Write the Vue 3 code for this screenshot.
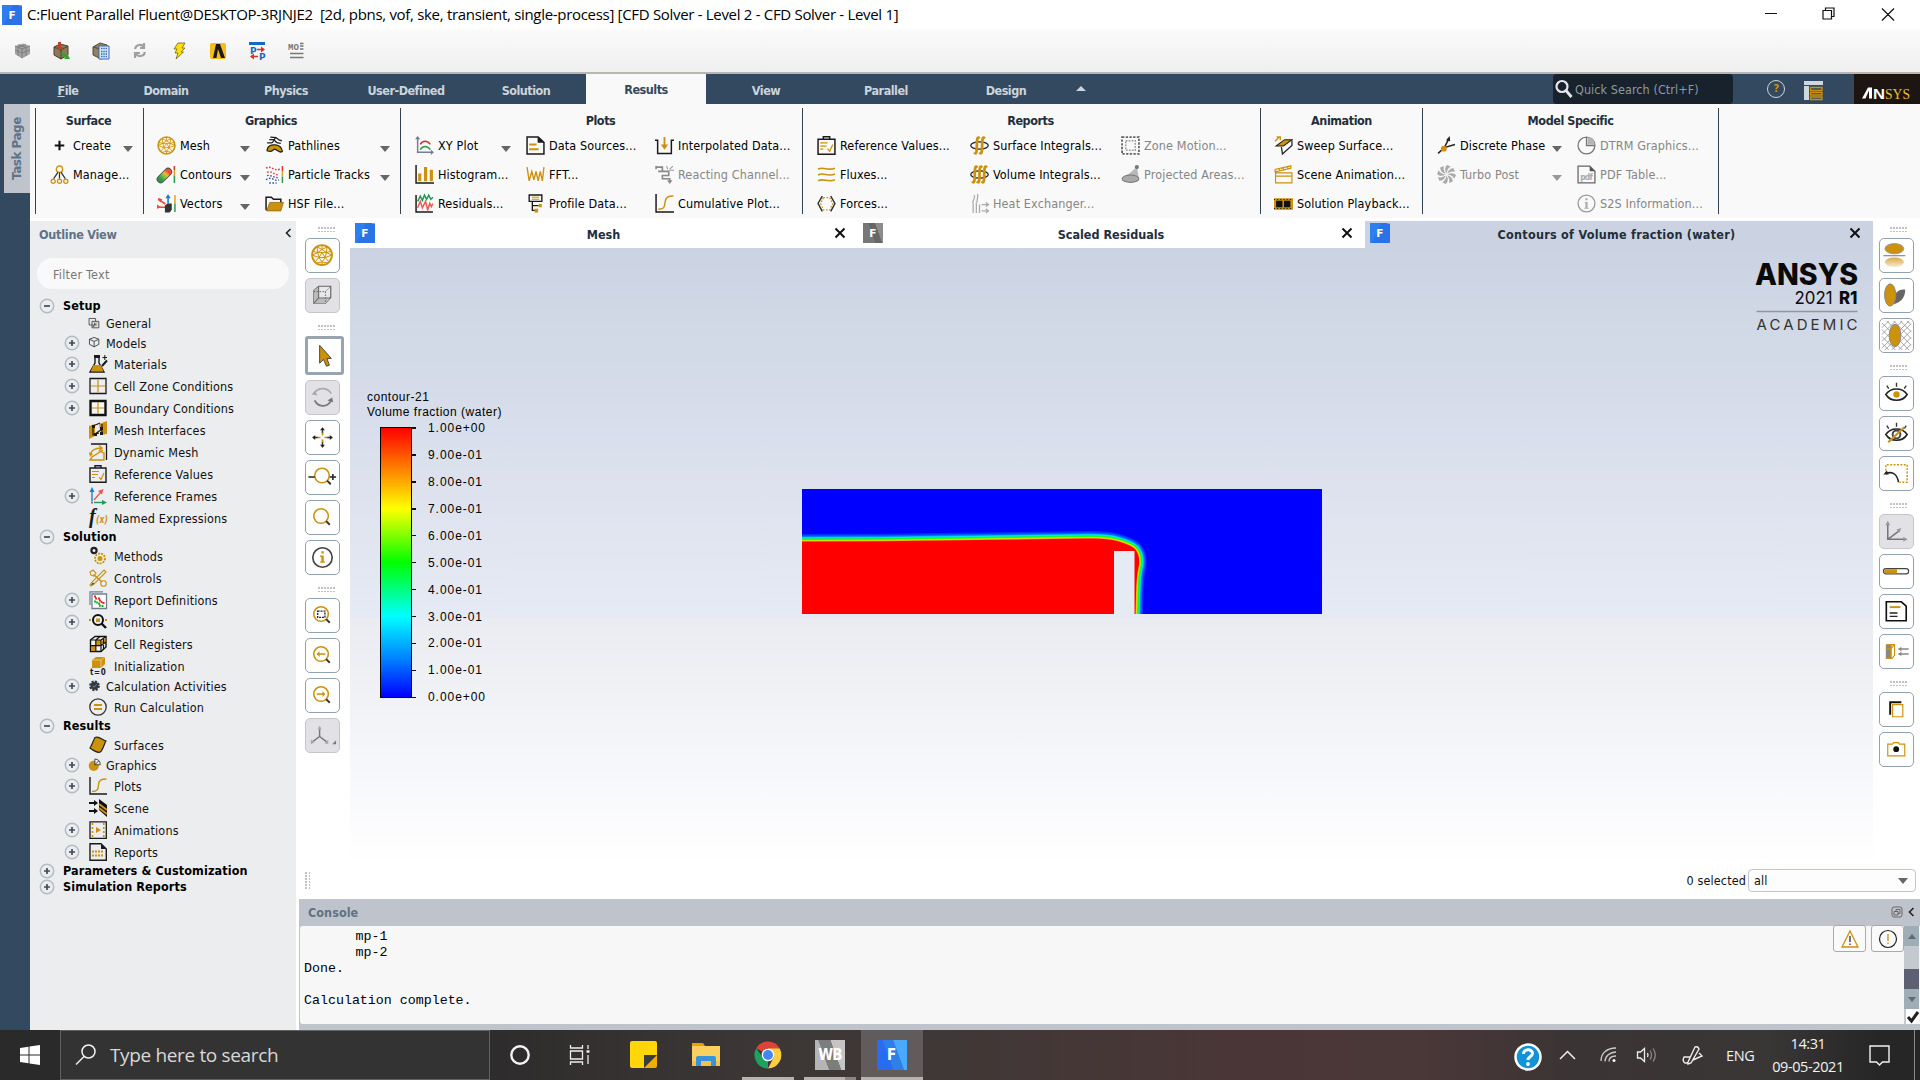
<script setup>
const gold = '#cc920e'
const dark = '#1a1a1a'

const stroke = (c, d, w = 1.4) => `<path d="${d}" fill="none" stroke="${c}" stroke-width="${w}"/>`
const fill = (c, d) => `<path d="${d}" fill="${c}"/>`

const meshBall = `<circle cx="9" cy="9" r="8" fill="#fdf6e6" stroke="${gold}" stroke-width="1.500"/>` +
  stroke(gold, 'M5 2.500 9 4.500 13 2.500M9 4.500 5.500 7 6.500 11 11.500 11 12.500 7 9 4.500V1M5.500 7 12.500 7M9 7 6.500 11M9 7 11.500 11M5.500 7 1 9M12.500 7 17 9M1.500 6 5.500 7 5 2.500M16.500 6 12.500 7 13 2.500M1 9 6.500 11 3.500 14.500M17 9 11.500 11 14.500 14.500M6.500 11 9 14.500 11.500 11M9 14.500V17M9 14.500 4.500 15.500M9 14.500 13.500 15.500', 0.8)
const clipboard = stroke(dark, 'M1 3H17V17.3H1ZM6 3V.8H12V3', 1.4) + stroke(gold, 'M3 6.5H10M3 9.5H9M3 12.5H6M10 12 12 14.5 15 8', 1.2)
const sCurve = stroke(dark, 'M1 0V17H18', 1.4) + stroke(gold, 'M3 14.5C9 14.5 9 12 9.5 8 10 3 12 2 17.5 2', 1.4)
const integral = (x) => `M${x + 5} 2.5C${x + 3} 0 ${x + 2.5} 3 ${x + 2.5} 9S${x + 2} 18 ${x} 15.5`

const icons = {
  plus: stroke('#111', 'M9 4.5V13.5M4.5 9H13.5', 2),
  manage: `<circle cx="9" cy="4" r="3" fill="none" stroke="${gold}" stroke-width="1.3"/>` + stroke('#333', 'M7.5 7 3.5 13M10.5 7 14.5 13M9 7V13', 1.2) +
    `<g fill="none" stroke="${gold}" stroke-width="1.2"><circle cx="3" cy="15.5" r="2"/><circle cx="9" cy="15.5" r="2"/><circle cx="15" cy="15.5" r="2"/></g>`,
  mesh: meshBall,
  pathlines: stroke('#222', 'M4 3.5H8C10 3.5 9 6 12 6.5L15 7M2 6.5H6C8 6.5 8 4 10 1.5L5 1M10 1.5C12 2 12 4 16 4.5', 1.2) +
    `<path d="M2 14C2 9 6 8 10 8.500S16 12 16.500 14.500C14 17 12 13 9 12.500 7 13 7 16 2 14Z" fill="${gold}" stroke="#222" stroke-width="1.200"/>`,
  contours: '<defs><linearGradient id="ct" x1="0" y1="1" x2="1" y2="0"><stop offset="0" stop-color="#2a9a4a"/><stop offset=".45" stop-color="#8bc53f"/><stop offset=".7" stop-color="#f2b632"/><stop offset="1" stop-color="#e5533d"/></linearGradient></defs>' +
    '<path d="M3.500 13.500 10.500 6.500" stroke="#444" stroke-width="7.600" stroke-linecap="round"/><path d="M3.500 13.500 10.500 6.500" stroke="url(#ct)" stroke-width="6.200" stroke-linecap="round"/>' + stroke('#c0392b', 'M16.500 1V5', 1.5) + stroke('#e0a020', 'M16.500 5V10', 1.5) + stroke('#2a9a4a', 'M16.500 10V17', 1.5),
  vectors: stroke('#e74c3c', 'M1 5 8 9.500M1 12.500H8', 1.5) + fill('#e74c3c', 'M0 10 4 12.500 0 14ZM1 3.500 5 5 3 8Z') + stroke('#1f7fc4', 'M10.500 2V9', 1.5) + fill('#1f7fc4', 'M8 4 10.500 0 13 4Z') +
    fill('#333', 'M7.500 11 10 9H14V15L12 17.500H7.500Z') + stroke('#e0a020', 'M17 1V9', 1.4) + stroke('#2a9a4a', 'M17 9V17', 1.4),
  particles: '<g fill="none" stroke-width="1.300" stroke-dasharray="1.500 1.500"><path d="M1 3C6 0 8 6 14 4" stroke="#d33"/><path d="M2 7C7 5 9 10 13 9" stroke="#d33"/><path d="M1 14C6 10 9 16 13 14" stroke="#334a9a"/><path d="M2 10C5 9 8 12 12 12M4 17H11" stroke="#334a9a"/></g>' + stroke('#d33', 'M16.500 1V6', 1.4) + stroke('#e0a020', 'M16.500 6V11', 1.4) + stroke('#2a9a4a', 'M16.500 11V17', 1.4),
  folder: stroke(dark, 'M1 15.500V3H6L8 5H15V8', 1.4) + `<path d="M1.500 16 4.500 8H17.500L15 16Z" fill="${gold}" stroke="#7a5608" stroke-width=".6"/>`,
  xyplot: stroke('#708090', 'M2.500 1V15.500H17', 1.4) + fill('#708090', 'M0 3 2.500 0 5 3ZM15 13 18 15.500 15 18Z') + stroke('#c33', 'M5 8C7 4 12 4 14.500 8', 1.4) + stroke('#2a9a4a', 'M5 13C7 9 12 9 14.500 13', 1.4),
  histogram: stroke(dark, 'M1 0V17H18', 1.4) + fill(gold, 'M3 8H6V15.500H3ZM8.500 2H11.500V15.500H8.500ZM14 4.500H17V15.500H14Z'),
  residuals: stroke(dark, 'M1 1V17H17', 1.4) + stroke('#1f9a58', 'M2.500 7 5 2 7 6 9 1 11 5 13 1 15 5 17 3', 1.4) + stroke('#ee5a52', 'M2.500 13 5 7 7 13 10 7 12 15 14 9 15.500 12 17 9', 1.4),
  datasrc: stroke(dark, 'M1 1H11.500L17 6V17H1Z', 1.4) + fill(dark, 'M11 1 17 6.500H11Z') + stroke(gold, 'M3 8H10M3 12.500H12', 2),
  fft: stroke(gold, 'M1 2 3 15 5.500 6 7.500 14 9.500 6 11.500 15 13.500 6 15.500 15 17 2', 1.3),
  profile: stroke(dark, 'M3 1H15V7H3ZM6 7V15.500H10M6 11H12', 1.3) + stroke(gold, 'M5.500 3H12.500M5.500 5H12.500', 1) + fill(gold, 'M12 9.500H15V12.500H12ZM8 14H11.500V17.500H8Z'),
  interp: stroke(dark, 'M0 4H2.500V16.500H15.500V4H18', 1.4) + stroke(gold, 'M9 1V9', 1.8) + fill(gold, 'M5.500 8H12.500L9 13Z'),
  reacting: stroke('#888', 'M1 2H7V6H3M1 1V4M7 6H13V10H7V13H14V16', 1.5) + fill('#888', 'M11.500 14.500H16.500L14 18ZM12 1 10 4ZM9 1 11 6') + stroke('#999', 'M11 1 12 4M17 1 14 4M13 5H18', 1),
  cumulative: sCurve,
  refvals: clipboard,
  fluxes: stroke(gold, 'M1 4C6 1 10 6 17 3M1 9.500C6 6.500 10 11.500 17 8.500M1 15C6 12 10 17 17 14', 1.5),
  forces: stroke('#333', 'M5 2 1 9 5 16.500M13 2 17 9 13 16.500', 1.4) + `<path d="M6 3.500H12L15 9 12 15H6L3.500 9Z" fill="none" stroke="${gold}" stroke-width="1.200" stroke-dasharray="1.500 1.500"/>`,
  surfint: `<ellipse cx="9" cy="9" rx="8.300" ry="3.500" fill="none" stroke="#222" stroke-width="1.200"/>` + stroke(gold, integral(4) + integral(9), 2.6),
  volint: `<ellipse cx="9" cy="9" rx="8.300" ry="3.500" fill="none" stroke="#222" stroke-width="1.200"/>` + stroke(gold, integral(2) + integral(6.5) + integral(11), 2.6),
  heatex: stroke('#aaa', 'M3 18V9M6 18V8M9 18V10M3 9C1 6 6 5 4 1M7 8C5 6 9 4 7 0M11 10H17M11 16H17M15 8 17.500 10 15 12M15 14 17.500 16 15 18', 1.2),
  zone: '<path d="M1 1H17V17H1Z" fill="none" stroke="#666" stroke-width="1.700" stroke-dasharray="2.200 1.300"/><path d="M4.500 4.500H13.500V13.500H4.500Z" fill="none" stroke="#999" stroke-width="1.400" stroke-dasharray="1.600 1.200"/>',
  projected: fill('#b8b8b8', 'M15 2 17 13H2Z') + '<ellipse cx="9" cy="13" rx="8" ry="3.500" fill="#aaa" stroke="#777"/><circle cx="15" cy="2" r="2" fill="#777"/>',
  sweep: `<path d="M2 9.500 10 3.500H17L9 9.500Z" fill="${gold}" stroke="#222"/><path d="M7 10.500 8 17 17 9V4" fill="none" stroke="#222" stroke-width="1.200"/>` + stroke(gold, 'M1 5 5 1M2.500 1H6V4', 1.3),
  scene: stroke(gold, 'M1.500 7.500H17V17H1.500ZM1.500 10.500H17M1 6.500 16 3V.8L1 4.200ZM5 3.500V5.500M9 2.500V4.500M13 2V4', 1.1),
  playback: fill(gold, 'M0 4H18V15H0Z') + fill('#111', 'M2 6.500H8V12.500H2ZM9.500 6.500H15.500V12.500H9.500Z') + '<path d="M0 5.200H18M0 13.800H18" stroke="#111" stroke-width="1" stroke-dasharray="1 2"/>',
  discrete: stroke('#222', 'M1 16.500 7 11 17 8M7 11 11 3', 1.4) + fill('#222', 'M8.500 4 12 0 12.500 5Z') + `<circle cx="6.500" cy="12" r="2.800" fill="${gold}"/>`,
  turbo: '<g fill="#aaa">' + [0, 45, 90, 135, 180, 225, 270, 315].map(a => `<path d="M9 8C7 5 7.500 2 9.500 0L13 1.500C10.500 3 9.500 5 9 8Z" transform="rotate(${a} 9 9)"/>`).join('') + '</g>',
  dtrm: '<circle cx="9" cy="9" r="8" fill="none" stroke="#777" stroke-width="1.200"/><path d="M10 8V1A8 8 0 0 1 17 8Z" fill="#b5b5b5"/><path d="M9 1V9H17" fill="none" stroke="#777" stroke-width="1.200"/>',
  pdf: stroke('#666', 'M1 1H12L17 6V17H1Z', 1.2) + fill('#555', 'M12 1 17 6H12Z') + '<text x="3" y="14" font-size="8" font-weight="bold" fill="#aaa" font-family="DejaVu Sans Condensed,sans-serif" textLength="12">pdf</text>',
  s2s: '<circle cx="9" cy="9" r="8" fill="none" stroke="#999" stroke-width="1.200"/>' + fill('#aaa', 'M8 4H10V6H8ZM7.500 7.500H10V13H11V14H7V13H8V8.500H7.500Z'),
  general: stroke('#444', 'M1.500 2H10.500V11H1.500Z', 1.2) + '<path d="M5.500 6H15V15H5.500Z" fill="#ddd" stroke="#444" stroke-width="1.200"/>' + stroke('#444', 'M7 13 12 8M9 13H7V10M9 8V11H12', 1.1),
  models: stroke('#444', 'M8.500 2 15 4.500V11.500L8.500 15 2 11.500V4.500ZM2 4.500 8.500 7.500 15 4.500M8.500 7.500V15', 1.3),
  materials: fill(dark, 'M5 0H11V3H5Z') + stroke(dark, 'M6 3V8L1 17H15L10 8V3', 1.4) + fill(gold, 'M4.500 10H11.500L14.500 16.300H1.800Z') + stroke(dark, 'M13 11 18 5.500', 2) + stroke(dark, 'M13.500 2.500H18M15.800 0V5', 1),
  cellzone: stroke(dark, 'M1 1.500H17V16.500H1Z', 1.3) + stroke(gold, 'M9 2.500V15.500M2 9H16', 1.2),
  boundary: '<path d="M1.500 2H16.500V16H1.500Z" fill="#f4f4f4" stroke="#111" stroke-width="2.400"/>' + stroke(gold, 'M9 3V15M3 9H15', 1.2),
  interfaces: fill(gold, 'M0 5 6 3V15L0 18ZM10 3 18 0V13L12 14Z') + stroke(dark, 'M4 5V14L10 12M4 5 11 2M13 3V12M6 13 13 8', 1.2) + fill(dark, 'M3 4H6V7H3ZM5 12H8V15H5ZM11 6H14V9H11ZM11 11H14V14H11Z'),
  dynamic: stroke(dark, 'M2 1H17.500V17', 1.3) + stroke(gold, 'M1 12C2 8 5 5 12 5M1 17H15V10C12 10 12 8 14 7L3 14ZM10 2.500 13 5 10 8', 1.4) + fill(gold, 'M0 9 4 11 1 14Z'),
  frames: stroke('#1f7fc4', 'M3 14V2', 1.4) + fill('#1f7fc4', 'M.5 5 3 0 5.500 5Z') + stroke('#e55', 'M5 13 12 5', 1.4) + fill('#e55', 'M9 4 14.500 2 13 7.500Z') + stroke('#1f9a58', 'M5 15.500H14', 1.4) + fill('#1f9a58', 'M13 13 18 15.500 13 18Z') + fill('#777', 'M2 14.500H4V16.500H2Z'),
  named: '<text x="0" y="14" font-size="20" font-weight="bold" font-style="italic" fill="#1a1a1a" font-family="Liberation Serif,serif">f</text><text x="7" y="13.500" font-size="10" font-weight="bold" font-style="italic" fill="#cc920e" font-family="DejaVu Sans Condensed,sans-serif" textLength="12" lengthAdjust="spacingAndGlyphs">(x)</text>',
  methods: '<circle cx="5" cy="3.500" r="2.600" fill="none" stroke="#222" stroke-width="2.200"/>' + `<circle cx="11" cy="11.500" r="5" fill="none" stroke="${gold}" stroke-width="1.800" stroke-dasharray="2 1"/><circle cx="11" cy="11.500" r="2.500" fill="${gold}"/>`,
  controls: `<g fill="none" stroke="${gold}" stroke-width="1.100"><path d="M4.500 5.500 13 13" stroke-width="1.600"/><path d="M1 3 4 1 7 4 5 7 2 6ZM15 1 17 3 5 15 2 17 1 16 3 13Z"/><circle cx="14.500" cy="14.500" r="2.800"/></g>` + fill(dark, 'M2 16 4 13.500 5 15Z'),
  repdef: stroke('#708090', 'M1 14V.8H14', 1.2) + '<path d="M3 3H17.500V17.500H3Z" fill="#fff" stroke="#708090" stroke-width="1.300"/><path d="M5 5.500H7V7.500H10V9.500H12.500V12H15.500" fill="none" stroke="#e22" stroke-width="1.800" stroke-dasharray="2 1"/><path d="M5 10.500H8V12.500H11V15H15" fill="none" stroke="#2a2" stroke-width="1.800" stroke-dasharray="2 1"/>',
  monitors: '<circle cx="9" cy="7" r="5" fill="#eee" stroke="#111" stroke-width="2"/>' + fill(gold, 'M7 5.500H11V9H7ZM0 6H2V8H0ZM16 6H18V8H16Z') + stroke('#111', 'M12.500 10.500 17 15', 2.4),
  registers: '<path d="M1.500 5 6 1.500H17V12L12 16.500H1.500Z" fill="#f4f4f4" stroke="#111" stroke-width="1.400"/>' + fill(gold, 'M7 5H12V10.500H7ZM2 11H6.500V16H2ZM13 6 16.500 3V7L13 10Z') + stroke('#111', 'M1.500 5H12V16.500M12 5 17 1.500M1.500 10.700H12L17 7M6.800 5V16.500L6.800 5 11 1.500M14.500 3V14', 1.2),
  init: fill(gold, 'M3 3 7 0H16V7L12 11H3Z') + stroke('#f0d090', 'M3 3H12V11M12 3 16 0', .8) + '<text x="1" y="18" font-size="8" font-weight="bold" fill="#222" font-family="DejaVu Sans Condensed,sans-serif" textLength="16">t=0</text>',
  calcact: '<circle cx="9" cy="8" r="5.500" fill="#333a44" stroke="#333a44" stroke-width="4" stroke-dasharray="2.600 1.700"/>' + stroke('#8a93a0', 'M6.500 8 8.500 10 12 6', 1.1),
  run: '<circle cx="9" cy="9" r="8.200" fill="none" stroke="#333" stroke-width="1.300"/>' + stroke(gold, 'M5 7H13M5 11H13', 1.8),
  surfaces: `<path d="M1 12C3 9 4 5 6 1.500 10 0 12 3 17 5 15 8 15 11 12 15.500 9 18 5 15 1 12Z" fill="${gold}" stroke="#222" stroke-width="1.200"/>`,
  gfx: `<circle cx="8" cy="9.500" r="7" fill="${gold}"/>` + '<path d="M9.500 0V8H17C17 3 14 0 9.500 0Z" fill="#eee" stroke="#333" stroke-width="1.200"/>' + stroke('#333', 'M9.500 8 15 2.500', 1.2),
  plots: sCurve,
  scenetree: stroke('#111', 'M0 4H7M0 12H7', 1.8) + fill('#111', 'M5 1 9 4 5 7ZM5 9 9 12 5 15ZM10 0 18 6V18L10 11Z') + stroke(gold, 'M10 5 18 11M10 9 18 15', 2),
  animations: stroke(dark, 'M1 .8H17.300V17.300H1Z', 1.3) + '<path d="M3.500 2V16M14.800 2V16" stroke="#cc920e" stroke-width="1.600" stroke-dasharray="2 2"/>' + fill(gold, 'M7 6 12 9 7 12Z'),
  reports: stroke(dark, 'M1 .8H12L17.300 6V17.300H1Z', 1.4) + fill(dark, 'M12 1 17.300 6H12Z') + '<path d="M3 8.500H15M3 12.500H15" stroke="#cc920e" stroke-width="2" stroke-dasharray="2 1"/>'
}

// icons of the floating view toolbars, drawn on a 34 x 34 grid
const glass = (x = 15.5, y = 15.5) => `<circle cx="${x}" cy="${y}" r="7.500" fill="none" stroke="${gold}" stroke-width="1.600"/>` + stroke('#333', `M${x + 5.2} ${y + 5.2} ${x + 9} ${y + 9}`, 2)
const eye = stroke('#222', 'M6 18C11 10.500 23 10.500 28 18 23 26 11 26 6 18Z', 1.6) + stroke('#333', 'M17 6V10M7 9 9 12M27 9 25 12', 1.4)
const tools = {
  mesh: `<g transform="translate(5 5) scale(1.280)">${meshBall}</g>`,
  cube: '<path d="M8 12 13 7.500H25.500V19L20 25H8Z" fill="#e8e8ea" stroke="#666" stroke-width="1.200"/>' + fill('#bbb', 'M8 12 13 8V19L8 25ZM13 20H25L20 25H8Z') + stroke('#666', 'M13 8V19.500H25M13 19.500 8 25', 1.1) + '<path d="M8 13H20V24M20 13 25 8" fill="none" stroke="#666" stroke-dasharray="1.500 1.500"/>',
  pointer: `<path d="M12 6.500V25L16 21 19 28 22 27 19.500 20H24Z" fill="${gold}" stroke="#444" stroke-width="1"/>`,
  rotate: stroke('#aaa', 'M8 14C11 6 22 6 26 13', 1.6) + stroke('#777', 'M9 20C12 27 22 28 26 20', 1.8) + fill('#aaa', 'M6 14 9 10 12 15Z') + fill('#777', 'M22 20 27 17 28 22Z'),
  pan: stroke(gold, 'M17 11V15M17 19V23M11 17H15M19 17H23', 1.8) + stroke('#333', 'M17 8V12M17 22V27M7 17H12M22 17H27', 1.4) + fill('#222', 'M14.500 9.500 17 6.500 19.500 9.500ZM14.500 24.500 17 27.500 19.500 24.500ZM9.500 14.500 6.500 17 9.500 19.500ZM24.500 14.500 27.500 17 24.500 19.500Z'),
  zoompm: glass(16.5, 15) + stroke('#222', 'M2.500 16.500H9M24.500 16.500H31M27.700 13.300V19.700', 1.6),
  zoom: glass(),
  info: '<circle cx="17" cy="17" r="10" fill="none" stroke="#444" stroke-width="1.700"/>' + fill(gold, 'M15.800 10.500H18.300V13H15.800ZM14.500 15H18.300V21H19.500V22.500H14.500V21H15.800V16.500H14.500Z'),
  zoombox: glass() + '<path d="M12 12.500H19.500V19H12Z" fill="none" stroke="#222" stroke-width="1.400" stroke-dasharray="2 1"/>',
  zoomback: glass() + stroke(gold, 'M11.500 15.500H20', 1.6) + fill(gold, 'M14 12.500V18.500L11 15.500Z'),
  zoomfwd: glass() + stroke(gold, 'M11 15.500H19', 1.6) + fill(gold, 'M17 12.500V18.500L20 15.500Z'),
  axes3: stroke('#777', 'M14 8V18L6 24M14 18 22 24', 1.5) + fill('#aaa', 'M12 11 14 7 16 11ZM5 21 9 24 5 26ZM23 21 19 25 23 26Z') + fill('#777', 'M27 26H31V22Z'),
  reflect: `<ellipse cx="14.800" cy="10" rx="9.700" ry="5.300" fill="${gold}" stroke="#999"/>` + stroke('#888', 'M3.500 17.200H26', 1.2) + '<defs><linearGradient id="rf" x1="0" y1="0" x2="0" y2="1"><stop offset="0" stop-color="#d9a94a"/><stop offset="1" stop-color="#f7ecd4"/></linearGradient></defs><ellipse cx="14.800" cy="24" rx="9.700" ry="5" fill="url(#rf)"/>',
  shadow: '<path d="M13 24C14 15 19 10 26 11 26 20 20 25 13 26Z" fill="#666"/>' + `<ellipse cx="10.500" cy="16.500" rx="5.800" ry="11.500" fill="${gold}" stroke="#888"/>`,
  hatch: '<path d="M2 9 9 2M2 16 16 2M2 23 23 2M2 30 30 2M5 32 32 5M12 32 32 12M19 32 32 19M26 32 32 26M2 25 9 32M2 18 16 32M2 11 23 32M2 4 30 32M7 2 32 27M14 2 32 20M21 2 32 13M28 2 32 6" stroke="#999" stroke-width=".9"/>' + `<ellipse cx="15.500" cy="17" rx="6" ry="11.500" fill="${gold}" stroke="#888"/>`,
  eye: eye + `<circle cx="17" cy="18" r="3.300" fill="${gold}"/>`,
  eyeoff: eye + '<circle cx="17" cy="18" r="4" fill="none" stroke="#444" stroke-width="2"/>' + stroke(gold, 'M8.500 26 25 10.500', 2.2),
  undo: `<path d="M6 14V8H28V26H20" fill="none" stroke="${gold}" stroke-width="1.500" stroke-dasharray="2 1.500"/>` + stroke('#222', 'M6 17C14 14 18 19 19 26', 1.6) + fill('#222', 'M3.500 18 7 14 9 18Z'),
  axes: stroke('#777', 'M8 9V25H25M8 25 20 16', 1.6) + fill('#999', 'M5.500 10.500 8 6 10.500 10.500ZM24 22.500 28.500 25 24 27.500ZM17 15 22 13.500 20 18Z'),
  ruler: '<rect x="3.500" y="14" width="26" height="5.500" rx="2.700" fill="#fff" stroke="#444" stroke-width="1.200"/>' + fill(gold, 'M6.500 14.600H17.500V19H6.500C3.500 18.500 3.500 15 6.500 14.600Z'),
  note: stroke('#111', 'M6.500 7H22L27 11.500V26.500H6.500Z', 1.7) + stroke(gold, 'M10 12.500H21', 2) + stroke('#222', 'M10 18.500H18M10 22H18', 1.5),
  box: fill('#888', 'M6 10H12V24.500H6Z') + stroke(gold, 'M6.500 10H15V21L12 24.500M6 14H11L15 10M11 14V24H6', 1.2) + stroke('#888', 'M19 14.500H29.500M19 19.500H29.500', 1.5) + fill('#888', 'M19 14.500 22 12V17ZM19 19.500 22 17V22Z'),
  copy: stroke('#111', 'M10.500 22.500V9.500H22', 2) + stroke(gold, 'M13 12H23.500V24.500H13Z', 1.2),
  camera: stroke(gold, 'M8 11.500H13L14 10H19L20 11.500H25.500V23.500H8Z', 1.2) + '<circle cx="16.700" cy="16.700" r="3" fill="#111"/>'
}

const leftTools = [
  ['dots'], ['mesh'], ['cube', 'off'], ['dots'], ['pointer', 'on'], ['rotate', 'off'], ['pan'], ['zoompm'], ['zoom'], ['info'],
  ['dots'], ['zoombox'], ['zoomback'], ['zoomfwd'], ['axes3', 'off']
]
const rightTools = [
  ['dots'], ['reflect'], ['shadow'], ['hatch'], ['dots'], ['eye'], ['eyeoff'], ['undo'],
  ['dots'], ['axes', 'off'], ['ruler'], ['note'], ['box'], ['dots'], ['copy'], ['camera']
]

const tabs = ['Domain', 'Physics', 'User-Defined', 'Solution', 'Results', 'View', 'Parallel', 'Design']

// item: [icon, label, arrow position, disabled]
const groups = [
  { title: 'Surface', cls: 'g1', cols: [[['plus', 'Create', 73], ['manage', 'Manage...']]] },
  { title: 'Graphics', cls: 'g2', cols: [[['mesh', 'Mesh', 83], ['contours', 'Contours', 83], ['vectors', 'Vectors', 83]], [['pathlines', 'Pathlines', 114.5], ['particles', 'Particle Tracks', 114.5], ['folder', 'HSF File...']]] },
  { title: 'Plots', cls: 'g3', cols: [[['xyplot', 'XY Plot', 86], ['histogram', 'Histogram...'], ['residuals', 'Residuals...']], [['datasrc', 'Data Sources...'], ['fft', 'FFT...'], ['profile', 'Profile Data...']], [['interp', 'Interpolated Data...'], ['reacting', 'Reacting Channel...', 0, true], ['cumulative', 'Cumulative Plot...']]] },
  { title: 'Reports', cls: 'g4', cols: [[['refvals', 'Reference Values...'], ['fluxes', 'Fluxes...'], ['forces', 'Forces...']], [['surfint', 'Surface Integrals...'], ['volint', 'Volume Integrals...'], ['heatex', 'Heat Exchanger...', 0, true]], [['zone', 'Zone Motion...', 0, true], ['projected', 'Projected Areas...', 0, true]]] },
  { title: 'Animation', cls: 'g5', cols: [[['sweep', 'Sweep Surface...'], ['scene', 'Scene Animation...'], ['playback', 'Solution Playback...']]] },
  { title: 'Model Specific', cls: 'g6', cols: [[['discrete', 'Discrete Phase', 115], ['turbo', 'Turbo Post', 115, true]], [['dtrm', 'DTRM Graphics...', 0, true], ['pdf', 'PDF Table...', 0, true], ['s2s', 'S2S Information...', 0, true]]] }
]

// row: [kind, label, icon, expander]
const tree = [
  ['head', 'Setup', '', '-'], ['small', 'General', 'general', ''], ['small mid', 'Models', 'models', '+'], ['item', 'Materials', 'materials', '+'],
  ['item', 'Cell Zone Conditions', 'cellzone', '+'], ['item', 'Boundary Conditions', 'boundary', '+'], ['item', 'Mesh Interfaces', 'interfaces', ''],
  ['item', 'Dynamic Mesh', 'dynamic', ''], ['item', 'Reference Values', 'refvals', ''], ['item', 'Reference Frames', 'frames', '+'], ['item', 'Named Expressions', 'named', ''],
  ['head', 'Solution', '', '-'], ['item', 'Methods', 'methods', ''], ['item', 'Controls', 'controls', ''], ['item', 'Report Definitions', 'repdef', '+'],
  ['item', 'Monitors', 'monitors', '+'], ['item', 'Cell Registers', 'registers', ''], ['item', 'Initialization', 'init', ''],
  ['small', 'Calculation Activities', 'calcact', '+'], ['item', 'Run Calculation', 'run', ''],
  ['head', 'Results', '', '-'], ['item', 'Surfaces', 'surfaces', ''], ['small', 'Graphics', 'gfx', '+'], ['item', 'Plots', 'plots', '+'],
  ['item', 'Scene', 'scenetree', ''], ['item', 'Animations', 'animations', '+'], ['item', 'Reports', 'reports', '+'],
  ['head', 'Parameters & Customization', '', '+'], ['head', 'Simulation Reports', '', '+']
]

const levels = ['1.00e+00', '9.00e-01', '8.00e-01', '7.00e-01', '6.00e-01', '5.00e-01', '4.00e-01', '3.00e-01', '2.00e-01', '1.00e-01', '0.00e+00']

const water = 'M-20 52.500 L80 52.300 285 49.500 Q305 49 315 52 Q329 56 333 60 Q338 66 337 76 Q334.500 85 334 105 L333 145 H-20Z'
const bands = [
  ['#0030ff', 15], ['#0068ff', 12], ['#00b0ff', 9.500], ['#00f0e0', 8], ['#00f060', 6.500], ['#20ff00', 5], ['#d8f000', 3], ['#ffa800', 1.500], ['#ff0000', 0]
]
</script>

<template>
  <div class="window">
    <header class="titlebar">
      <span class="flogo"><b>F</b></span>
      <span class="title">C:Fluent Parallel Fluent@DESKTOP-3RJNJE2&nbsp; [2d, pbns, vof, ske, transient, single-process] [CFD Solver - Level 2 - CFD Solver - Level 1]</span>
      <svg class="winbtns" width="150" height="29" fill="none" stroke="#111" stroke-width="1.2">
        <path d="M5 14.500H17M63 11.500H71.500V20H63ZM65.500 11V9H74V17.500H72M122 9.500 134 21.500M134 9.500 122 21.500" />
      </svg>
    </header>

    <div class="quickbar">
      <svg width="320" height="43">
        <g>
          <path d="M15 17 23 14.500 30 17V25L22 29.500 15 25Z" fill="#a2a2a2" />
          <path d="M15 17 22 20 30 17M22 20V29M15 21 22 24 30 21M18 15.500 26 18.500V27M26 15.500 18 18.500V27" stroke="#777" fill="none" stroke-width=".8" />
        </g>
        <g>
          <path d="M54 18 60 15 68 17V26L61 30 54 26Z" fill="#8a7a55" stroke="#4c432d" />
          <path d="M54 18 61 21 68 17M61 21V30" stroke="#4c432d" fill="none" />
          <path d="M58 13H61V18H63L59.500 22 56 18H58Z" fill="#b8442c" />
          <path d="M62 23 67 26.500V24L70 30H64L65.500 28.500 61 25Z" fill="#2fa52d" />
        </g>
        <g>
          <path d="M93 18 100 14 107 16V28L101 30 93 26Z" fill="#8f8260" stroke="#544a33" />
          <path d="M93 18 100 20V29" fill="none" stroke="#544a33" />
          <path d="M99 17H109V30H99Z" fill="#dce9fb" stroke="#3c6bb4" />
          <path d="M101 19.500H107M101 22.500H107M101 25H107M101 27.500H107" stroke="#3c6bb4" stroke-dasharray="1.500 .8" stroke-width="1.500" />
        </g>
        <path d="M135 20C136 15 142 15 144 18M145 23C144 28 138 28 136 25M144 14V19H140M135 29V24H140" fill="none" stroke="#a0a0a0" stroke-width="2.200" />
        <path d="M178 14H185L182 19H185L181 23H183.500L176 30 178 24H175L177 20H174Z" fill="#ffe000" stroke="#6d6320" stroke-width=".8" />
        <rect x="210" y="14" width="16" height="16" rx="2" fill="#f7bd1e" />
        <path d="M213 29 216 15H220L225 29H221L218 20 216.500 29Z" fill="#1c1a17" />
        <path d="M249 13H265V16H249Z" fill="#1768c4" />
        <text x="250" y="25" class="pp">P</text><text x="259" y="31" class="pp">P</text>
        <path d="M257 20.500H264M251 27.500H258" stroke="#e03024" stroke-width="1.600" />
        <path d="M261 17.500 265 20.500 261 23.500ZM254 24.500 250 27.500 254 30.500Z" fill="#e03024" />
        <text x="288" y="21" class="mo" textLength="11" lengthAdjust="spacingAndGlyphs">MO</text>
        <path d="M300 14.500H303.500M300 17H303.500M300 20H303.500M290 24.500H303.500M290 28.500H303.500" stroke="#777" stroke-width="1.700" />
      </svg>
    </div>

    <nav class="tabs">
      <span class="tab file"><u>F</u>ile</span>
      <span v-for="t in tabs" :key="t" class="tab" :class="{ active: t === 'Results' }">{{ t }}</span>
      <i class="up"></i>
      <span class="search">
        <svg width="19" height="22" fill="none" stroke="#e3e8ec"><circle cx="7" cy="8.500" r="5.500" stroke-width="2.200" /><path d="M11 12.500 16.500 19" stroke-width="2.800" /></svg>
        Quick Search (Ctrl+F)
      </span>
      <span class="help">?</span>
      <svg class="layout" width="20" height="20"><path d="M0 0H19V4H0ZM0 5H5V19H0Z" fill="#cfd6dd" /><path d="M6.500 6.500H18V9.500H6.500ZM6.500 11.500H18V14H6.500ZM6.500 16H18V18.500H6.500Z" fill="none" stroke="#cc920e" stroke-width="1.300" /></svg>
      <span class="brand">
        <svg width="65" height="30"><path d="M8 24.500 14 13.500H18V24.500H15V16.500L11.500 24.500Z" fill="#fff" /><text x="19" y="24.500" fill="#fff" font-weight="bold" textLength="12" lengthAdjust="spacingAndGlyphs">N</text><text x="31" y="24.500" fill="#efc02e" textLength="25" lengthAdjust="spacingAndGlyphs">SYS</text></svg>
      </span>
    </nav>

    <div class="body">
      <aside class="rail"><span>Task Page</span></aside>
      <div class="main">
        <section class="ribbon">
          <div v-for="g in groups" :key="g.title" class="group" :class="g.cls">
            <h4>{{ g.title }}</h4>
            <div class="cols">
              <div v-for="(c, i) in g.cols" :key="i" class="col">
                <div v-for="it in c" :key="it[1]" class="cmd" :class="{ disabled: it[3] }">
                  <svg width="19" height="19" viewBox="0 0 18 18" v-html="icons[it[0]]"></svg>
                  <span>{{ it[1] }}</span>
                  <i v-if="it[2]" class="down" :style="{ left: it[2] + 'px' }"></i>
                </div>
              </div>
            </div>
          </div>
        </section>

        <div class="work">
          <aside class="outline">
            <div class="ohead"><b>Outline View</b><svg width="8" height="12" fill="none" stroke="#222" stroke-width="1.600"><path d="M6.500 1 2.500 5 6.500 9" /></svg></div>
            <div class="filter">Filter Text</div>
            <div class="tree">
              <div v-for="r in tree" :key="r[1]" class="row" :class="r[0]">
                <span class="exp"><svg v-if="r[3]" width="16" height="16"><circle cx="8" cy="8" r="6.700" fill="none" stroke="#b3bcc4" stroke-width="1.500" /><path :d="r[3] === '+' ? 'M5 8H11M8 5V11' : 'M5 8H11'" stroke="#414b5c" stroke-width="1.700" /></svg></span>
                <svg v-if="r[2]" class="ico" viewBox="0 0 18 18" v-html="icons[r[2]]"></svg>
                <span class="lbl">{{ r[1] }}</span>
              </div>
            </div>
          </aside>

          <div class="right">
            <div class="stage">
              <div class="toolcol left">
                <template v-for="(t, i) in leftTools" :key="i">
                  <i v-if="t[0] === 'dots'" class="dots"></i>
                  <span v-else class="tool" :class="t[1]"><svg width="33" height="33" viewBox="0 0 34 34" v-html="tools[t[0]]"></svg></span>
                </template>
              </div>

              <div class="views">
                <div class="vtabs">
                  <div class="vtab t1"><span class="flogo"><b>F</b></span><b class="name">Mesh</b><svg class="x" width="12" height="12"><path d="M1.500 1.500 10.500 10.500M10.500 1.500 1.500 10.500" stroke="#111" stroke-width="2" /></svg></div>
                  <div class="vtab t2"><span class="flogo grey"><b>F</b></span><b class="name">Scaled Residuals</b><svg class="x" width="12" height="12"><path d="M1.500 1.500 10.500 10.500M10.500 1.500 1.500 10.500" stroke="#111" stroke-width="2" /></svg></div>
                  <div class="vtab t3"><span class="flogo"><b>F</b></span><b class="name">Contours of Volume fraction (water)</b><svg class="x" width="12" height="12"><path d="M1.500 1.500 10.500 10.500M10.500 1.500 1.500 10.500" stroke="#111" stroke-width="2" /></svg></div>
                </div>
                <div class="canvas">
                  <svg class="mark" width="104" height="72">
                    <text x="0" y="23" font-size="30" font-weight="800" textLength="103" lengthAdjust="spacingAndGlyphs">ANSYS</text>
                    <text x="39.500" y="41.500" font-size="17.500" textLength="38" lengthAdjust="spacingAndGlyphs">2021</text>
                    <text x="84" y="41.500" font-size="17.500" font-weight="800" textLength="18.500" lengthAdjust="spacingAndGlyphs">R1</text>
                    <path d="M1.500 49.500H102.500" stroke="#8e94a0" stroke-width="1.300" />
                    <text x="1.500" y="68" font-size="15" fill="#333" textLength="101">ACADEMIC</text>
                  </svg>
                  <div class="legend">
                    <div class="ltitle">contour-21<br>Volume fraction (water)</div>
                    <div class="scale">
                      <div class="bar"></div>
                      <div class="levels"><span v-for="l in levels" :key="l">{{ l }}</span></div>
                    </div>
                  </div>
                  <svg class="plot" width="520" height="125">
                    <rect width="520" height="125" fill="#0000ff" />
                    <path v-for="b in bands" :key="b[1]" :d="water" fill="#ff0000" :stroke="b[0]" :stroke-width="b[1]" />
                    <rect x="312" y="62" width="20.500" height="63" fill="#e6eaf2" />
                  </svg>
                </div>
              </div>

              <div class="toolcol rightcol">
                <template v-for="(t, i) in rightTools" :key="i">
                  <i v-if="t[0] === 'dots'" class="dots"></i>
                  <span v-else class="tool" :class="t[1]"><svg width="33" height="33" viewBox="0 0 34 34" v-html="tools[t[0]]"></svg></span>
                </template>
              </div>
            </div>

            <div class="selbar"><i class="vdots"></i><span>0 selected</span><div class="select">all<i class="down"></i></div></div>

            <div class="console">
              <div class="chead"><b>Console</b>
                <svg width="26" height="14" fill="none"><rect x="1" y="1" width="10" height="10" rx="2" stroke="#666" /><path d="M3 5.500H7V9H3ZM5 5.500V3.500H9V7.500H7" stroke="#666" /><path d="M22.500 2 18.500 6 22.500 10" stroke="#222" stroke-width="1.600" /></svg>
              </div>
              <div class="cbody">
                <div class="log"><p class="in">mp-1</p><p class="in">mp-2</p><p>Done.</p><p>&nbsp;</p><p>Calculation complete.</p></div>
                <span class="cbtn"><svg width="20" height="20" fill="none"><path d="M10 2 18 18H2Z" stroke="#cc920e" stroke-width="1.300" /><path d="M10 7V13M10 14.500V16" stroke="#777" stroke-width="2" /></svg></span>
                <span class="cbtn"><svg width="20" height="20" fill="none"><circle cx="10" cy="10" r="8.500" stroke="#222" stroke-width="1.200" /><path d="M10 5V12M10 13.500V15" stroke="#cc920e" stroke-width="1.300" /></svg></span>
                <div class="scroll"><i class="sb"><i class="a"></i></i><i class="track"></i><i class="thumb"></i><i class="sb"><i class="d"></i></i><i class="chk"><svg width="13" height="14"><path d="M2 7 5.500 11 12 2" fill="none" stroke="#222" stroke-width="3" /></svg></i></div>
              </div>
            </div>
          </div>
        </div>
      </div>
    </div>

    <footer class="taskbar">
      <div class="start"><svg width="20" height="20" fill="#fff"><path d="M0 3 8.500 1.700V9.500H0ZM9.500 1.500 20 0V9.500H9.500ZM0 10.500H8.500V18.300L0 17ZM9.500 10.500H20V20L9.500 18.500Z" /></svg></div>
      <div class="find"><svg width="22" height="22" fill="none" stroke="#f2f2f2" stroke-width="1.500"><circle cx="13.500" cy="7.500" r="6.500" /><path d="M9 12.500 1 20.500" /></svg>Type here to search</div>
      <div class="app"><svg class="nudge" width="24" height="24"><circle cx="12" cy="12" r="8.700" fill="none" stroke="#f4f4f4" stroke-width="2.400" /></svg></div>
      <div class="app"><svg class="nudge more" width="22" height="22" fill="none" stroke="#eee" stroke-width="1.300"><path d="M1.500 1V4H13.500V1M1.500 7H13.500V15H1.500ZM1.500 21V18H13.500V21M19 1V5M19 11V20" /><path d="M17.500 7.500H20.500" stroke-width="2.500" /></svg></div>
      <div class="app"><svg class="nudge" width="27" height="28"><path d="M0 2Q0 0 2 0H25Q27 0 27 2V14H14V27H2Q0 27 0 25Z" fill="#ffd60a" /><path d="M14 27 27 14H14Z" fill="#3b3b3b" /><path d="M14 27H25Q27 27 27 25V14Z" fill="#f0ae00" /></svg></div>
      <div class="app"><svg width="28" height="26"><path d="M0 1H11L13 4H0Z" fill="#e8a200" /><path d="M0 4H28V24H0Z" fill="#fbd05e" /><path d="M0 19H28V24H0Z" fill="#f3c24b" /><path d="M4 24V16Q4 14 6 14H22Q24 14 24 16V24H19V19H9V24Z" fill="#3594dc" /></svg></div>
      <div class="app run"><svg width="28" height="28" viewBox="-14 -14 28 28"><path d="M0 0-11.700-6.750A13.500 13.500 0 0 1 11.700-6.750Z" fill="#db4437" /><path d="M0-6.500 0 0 0 13.500A13.500 13.500 0 0 1-11.700-6.750L-5 3Z" fill="#1da260" /><path d="M0-6.500H11.700A13.500 13.500 0 0 1 0 13.500L6 2Z" fill="#ffcd42" /><circle r="6.300" fill="#fff" /><circle r="5" fill="#4285f4" /></svg></div>
      <div class="app run wb"><span class="biglogo grey">WB</span></div>
      <div class="app run cur"><span class="biglogo">F</span></div>
      <div class="tray">
        <svg class="q" width="28" height="30"><circle cx="14" cy="15" r="12.500" fill="#1193d8" stroke="#fff" stroke-width="2.500" /><path d="M9.500 12C9.500 6.500 18.500 6.500 18.500 11.500 18.500 14.500 14 14.500 14 18" fill="none" stroke="#fff" stroke-width="3" /><circle cx="14" cy="22" r="1.900" fill="#fff" /></svg>
        <svg class="car" width="17" height="10"><path d="M1 9 8.500 1.500 16 9" fill="none" stroke="#eee" stroke-width="1.500" /></svg>
        <svg class="wifi" width="18" height="18" fill="none" stroke="#ccc" stroke-width="1.300"><path d="M1 15C1 7 7 2 16 2M5 15.500C5 10 10 6 16 6M9 15.500C9 12 12 10 16 10" /><circle cx="14" cy="14.500" r="1.500" fill="#fff" stroke="none" /></svg>
        <svg class="spk" width="22" height="18" fill="none" stroke="#eee" stroke-width="1.300"><path d="M1.500 6V12H4.500L8.500 15.500V2.500L4.500 6Z" /><path d="M11.500 7Q12.500 9 11.500 11" /><path d="M14 4.500Q17 9 14 13.500M17 2.500Q21.500 9 17 15.500" stroke="#888" /></svg>
        <svg class="pen" width="22" height="22" fill="none" stroke="#eee" stroke-width="1.400"><path d="M6 17 13 2Q16 1 17 4L9 18 6 19ZM8 12H2Q0 16 3 18H6M11 15 20 11 17 8" /></svg>
        <span class="lang">ENG</span>
        <div class="clock">14:31<br>09-05-2021</div>
        <svg class="note" width="22" height="22" fill="none" stroke="#f2f2f2" stroke-width="1.400"><path d="M1 1H20V17H13.500L10.500 20 7.500 17H1Z" /></svg>
        <i class="peek"></i>
      </div>
    </footer>
  </div>
</template>

<style>
body { margin: 0; overflow: hidden; }
</style>

<style scoped>
* { box-sizing: border-box; }
svg { display: block; flex: none; overflow: visible; }
.window { width: 1920px; height: 1080px; display: flex; flex-direction: column; background: #fff; color: #111; overflow: hidden; font: 12.500px "DejaVu Sans Condensed", "DejaVu Sans", sans-serif; letter-spacing: .12px; white-space: nowrap; }
.titlebar { height: 29px; display: flex; align-items: center; padding-left: 2px; font: 15px "Open Sans", sans-serif; letter-spacing: -.31px; }
.title { margin: -2px 0 0 5px; width: 1733px; color: #000; }
.winbtns { margin-top: -2px; }
.flogo { width: 20px; height: 20px; display: flex; align-items: center; justify-content: center; background: conic-gradient(from 155deg at 55% 0, #2a72e8 0 50deg, #2f7ef0 50deg 205deg, #58b0ff 205deg 300deg, #2a72e8 300deg); color: #fff; font: bold 10.500px "DejaVu Sans", sans-serif; flex: none; }
.flogo.grey { background: linear-gradient(70deg, #777 45%, #666 46% 70%, #8c8c8c 71%); }
.quickbar { height: 45px; background: linear-gradient(#fbfbfb, #efefef); border-bottom: 2px solid #b9b6b2; }
.pp { font: bold 9px "DejaVu Sans", sans-serif; fill: #1768c4; }
.mo { font: bold 9px "Liberation Mono", monospace; fill: #777; }
.tabs { height: 30px; background: #33495f; display: flex; align-items: center; color: #cbd4dc; font-weight: bold; font-size: 12.500px; letter-spacing: -.5px; }
.tab { width: 120px; height: 30px; line-height: 34px; text-align: center; }
.tab.file { width: 76px; margin-left: 30px; }
.tab.active { background: #f9f9f9; color: #33495f; line-height: 32px; }
.up { border: 5px solid transparent; border-top: 0; border-bottom: 5px solid #cbd4dc; margin-left: 10px; margin-top: -2px; }
.search { margin-left: 467px; width: 180px; height: 30px; background: #18222d; border-radius: 4px; display: flex; align-items: center; gap: 1px; padding-left: 2px; color: #8f989f; font-weight: normal; letter-spacing: .07px; }
.help { margin-left: 34px; width: 18px; height: 18px; border: 1.500px solid #cfd6dd; border-radius: 50%; color: #cc920e; font-size: 11px; line-height: 15px; text-align: center; }
.layout { margin-left: 19px; margin-top: 3px; }
.brand { margin-left: 30px; width: 66px; height: 30px; background: #1c1512; font: 15px "Liberation Serif", serif; letter-spacing: 0; }
.brand text:nth-child(2) { font-family: "Liberation Sans", sans-serif; }
.body { height: 926px; display: flex; }
.rail { width: 30px; background: #33495f; padding-left: 4px; }
.rail span { display: flex; align-items: center; justify-content: center; width: 26px; height: 89px; background: #bfc4cc; writing-mode: vertical-rl; transform: rotate(180deg); font: bold 12px "DejaVu Sans", sans-serif; letter-spacing: -.5px; color: #5f7288; }
.main { width: 1890px; display: flex; flex-direction: column; }
.ribbon { height: 114px; background: #f9f9f9; display: flex; padding: 4px 0 4px 5px; }
.group { height: 106px; border-left: 1.500px solid #33424f; position: relative; }
.group:last-child { border-right: 1.500px solid #33424f; }
.g1 { width: 108px; } .g2 { width: 257px; } .g3 { width: 402px; } .g4 { width: 458px; } .g5 { width: 162px; } .g6 { width: 297px; }
h4 { margin: 0 0 0 -2px; height: 23px; line-height: 26px; text-align: center; font-size: 12.500px; letter-spacing: -.45px; color: #222e3a; }
.g5 h4, .g6 h4 { margin-left: 0; }
.cols { display: flex; }
.col { display: flex; flex-direction: column; flex: none; }
.cmd { height: 29px; display: flex; align-items: center; gap: 4px; position: relative; color: #000; }
.cmd.disabled { color: #868686; }
.down { border: 5px solid transparent; border-bottom: 0; border-top: 6px solid #666; }
.disabled .down { border-top-color: #999; }
.cmd .down { position: absolute; top: 15px; }
.g1 .cols { padding-left: 14px; } .g2 .cols { padding-left: 13px; } .g3 .cols { padding-left: 14px; } .g4 .cols { padding-left: 14px; } .g5 .cols { padding-left: 13px; } .g6 .cols { padding-left: 14px; }
.g2 .col:first-child { width: 108px; }
.g3 .col:nth-child(1) { width: 111px; } .g3 .col:nth-child(2) { width: 129px; }
.g4 .col:nth-child(1) { width: 153px; } .g4 .col:nth-child(2) { width: 151px; }
.g6 .col:first-child { width: 140px; }
.work { height: 812px; display: flex; }
.outline { width: 266px; margin-top: 3px; background: #ecedef; }
.ohead { height: 26px; padding: 0 4px 0 9px; display: flex; justify-content: space-between; align-items: center; color: #5f7288; }
.ohead b { font-size: 12.500px; letter-spacing: -.25px; padding-top: 1px; }
.filter { margin: 11px 7px 0; height: 31px; line-height: 33px; border-radius: 16px; background: #f9f9f9; padding-left: 16px; color: #777; letter-spacing: .25px; }
.tree { padding-top: 9.500px; letter-spacing: .15px; }
.row { height: 22px; display: flex; align-items: center; padding-left: 34px; }
.row.head { height: 16px; padding-left: 9px; font-weight: bold; font-size: 12.500px; letter-spacing: .12px; position: relative; top: -1px; }
.row.small { height: 19px; }
.row.mid { height: 20px; }
.exp { width: 16px; height: 16px; position: relative; top: -1px; margin-right: 9px; }
.head .exp { margin-right: 8px; top: 0; }
.ico { width: 18px; height: 18px; position: relative; top: -1px; margin-right: 7px; }
.small .ico { width: 13px; height: 13px; margin: 0 5px 0 -1px; }
.lbl { color: #111; }
.small .lbl { margin-top: -1px; }
.head .lbl { color: #000; }
.right { width: 1624px; display: flex; flex-direction: column; }
.stage { height: 650px; display: flex; }
.toolcol { width: 54px; padding: 9px 0 0 9px; }
.toolcol.rightcol { width: 47px; padding-left: 6px; }
.tool { display: block; width: 35px; height: 35px; margin-bottom: 5px; border: 1.500px solid #93a1ae; border-radius: 5px; background: #fff; }
.tool.off { background: #e2e2e6; border-color: #c4c6c9; }
.tool.on { width: 39px; height: 39px; border: 3px solid #98a4b0; border-radius: 3px; }
.dots { display: block; width: 17px; height: 5px; margin: 12px 0 6px 13px; background: radial-gradient(circle at 1px 1px, #c0c0c0 .7px, transparent 1px) 0 0 / 3px 4px; }
.rightcol .dots { margin-left: 11px; }
.dots:first-child { margin-top: 0; margin-bottom: 6px; }
.views { width: 1523px; padding-top: 3px; }
.vtabs { height: 27px; display: flex; }
.vtab { display: flex; align-items: center; padding: 0 0 3px 5px; height: 27px; color: #222e3a; }
.name { flex: 1; text-align: center; letter-spacing: -.02px; padding: 2px 2px 0 0; }
.t1 { width: 508px; padding-right: 12px; } .t2 { width: 507px; padding-right: 12px; } .t3 { width: 508px; padding-right: 12px; background: #cbd3e2; }
.t3 .name { letter-spacing: .25px; padding-right: 6px; }
.canvas { height: 620px; position: relative; background: linear-gradient(#cbd3e2, #e6eaf4 369px, #eaecf1 371px, #f7f8fb 530px, #fff 618px); }
.mark { position: absolute; right: 14px; top: 14px; font-family: "Inter", "Lato", sans-serif; letter-spacing: 0; fill: #0a0a0a; }
.legend { position: absolute; left: 17px; top: 142px; font: 12px "Liberation Sans", sans-serif; letter-spacing: .5px; color: #000; }
.ltitle { line-height: 15px; }
.scale { display: flex; margin: 7px 0 0 13px; }
.bar { width: 32px; height: 271px; border: 1px solid #000; background: linear-gradient(#f00, #ff9000 17%, #ff0 30%, #0f0 50%, #0ff 70%, #0080ff 86%, #00f); }
.levels { margin-top: -12.500px; }
.levels span { display: flex; align-items: center; height: 26.950px; letter-spacing: .95px; }
.levels span::before { content: ""; width: 4px; height: 1.500px; background: #111; margin-right: 12px; }
.plot { position: absolute; left: 451.500px; top: 241px; overflow: hidden; }
.selbar { height: 31px; display: flex; align-items: center; justify-content: flex-end; padding: 0 4px 6px 9px; gap: 2px; margin: 0; }
.vdots { width: 5px; height: 17px; margin-right: auto; background: radial-gradient(circle at 1px 1px, #c0c0c0 .7px, transparent 1px) 0 0 / 4px 3px; }
.select { width: 168px; height: 23px; border: 1.500px solid #bdc7d1; border-radius: 4px; display: flex; align-items: center; justify-content: space-between; padding: 0 7px 0 5px; background: #fdfdfd; }
.console { height: 131px; margin-left: 3px; background: #bfc4cc; }
.chead { height: 27px; display: flex; align-items: center; justify-content: space-between; padding: 0 3px 0 9px; color: #5f7288; letter-spacing: .05px; }
.cbody { height: 98px; margin-left: 1px; background: #f7f7f7; display: flex; border-radius: 3px 0 0 3px; }
.log { flex: 1; padding: 3px 0 0 4px; }
.log p { margin: 0; height: 16px; font: 13.300px/16px "Liberation Mono", monospace; letter-spacing: 0; color: #000; }
.log .in { padding-left: 51.500px; }
.cbtn { width: 33px; height: 27px; margin-top: -1px; border: 1px solid #aaa; border-radius: 3px; background: #fafafa; margin-right: 5px; display: flex; align-items: center; justify-content: center; }
.cbtn + .cbtn { margin-right: 0; }
.scroll { width: 15px; margin-right: 1px; display: flex; flex-direction: column; }
.scroll > i { display: flex; align-items: center; justify-content: center; }
.sb { height: 20px; background: #9eadb6; }
.track { height: 23px; background: #c2cad0; }
.thumb { height: 20px; background: #5b6172; }
.a, .d { border: 4px solid transparent; }
.a { border-top: 0; border-bottom: 5px solid #5d6b78; } .d { border-bottom: 0; border-top: 5px solid #5d6b78; }
.chk { height: 15px; background: #fff; border-left: 2px solid #c5cbd0; }
.taskbar { height: 50px; display: flex; background: linear-gradient(90deg, #2a2a2a, #2e2c2c 26%, #3b3635 38%, #403836 50%, #4a3637 64%, #4a3738 74%, #3b3434 82%, #393636 92%, #262626 98%); color: #f2f2f2; font-family: "Open Sans", sans-serif; letter-spacing: 0; }
.start { width: 60px; display: flex; align-items: center; justify-content: center; }
.find { width: 430px; background: #333; border: 1px solid #626262; display: flex; align-items: center; gap: 13px; padding-left: 14px; font-size: 19px; letter-spacing: -.35px; color: #d8d8d8; }
.app { width: 61.800px; position: relative; display: flex; align-items: center; justify-content: center; }
.nudge { margin-right: 2px; }
.nudge.more { margin-right: 5px; }
.app.run::after { content: ""; position: absolute; left: 5px; right: 5px; bottom: 0; height: 3px; background: #b8b2b0; }
.app.wb::after { background: linear-gradient(90deg, #b8b2b0 41px, #8a8482 41px); }
.app.cur { background: #625b5b; }
.app.cur::after { left: 0; right: 0; }
.biglogo { width: 30px; height: 30px; background: linear-gradient(70deg, #2a6cf0 40%, #2f7fe8 41% 66%, #4aa8ff 67%); color: #fff; font: bold 15px/30px "DejaVu Sans Condensed", sans-serif; text-align: center; }
.biglogo.grey { background: linear-gradient(70deg, #b5b5b5 34%, #7d7d7d 35% 64%, #c5c5c5 65%); letter-spacing: -1px; }
.tray { margin-left: auto; display: flex; align-items: center; }
.car { margin-left: 17px; } .wifi { margin-left: 24px; } .spk { margin-left: 18px; } .pen { margin-left: 24px; }
.q { margin-top: 4px; } .pen { margin-top: 2px; }
.lang { margin-left: 22px; font-size: 14.500px; letter-spacing: -.3px; width: 30px; }
.clock { margin-left: 14px; width: 76px; text-align: center; font-size: 14.500px; line-height: 23px; letter-spacing: -.4px; }
.note { margin-left: 23px; margin-top: 2px; }
.peek { width: 1px; height: 50px; background: #8a8a8a; margin: 0 5px 0 23px; }
</style>
